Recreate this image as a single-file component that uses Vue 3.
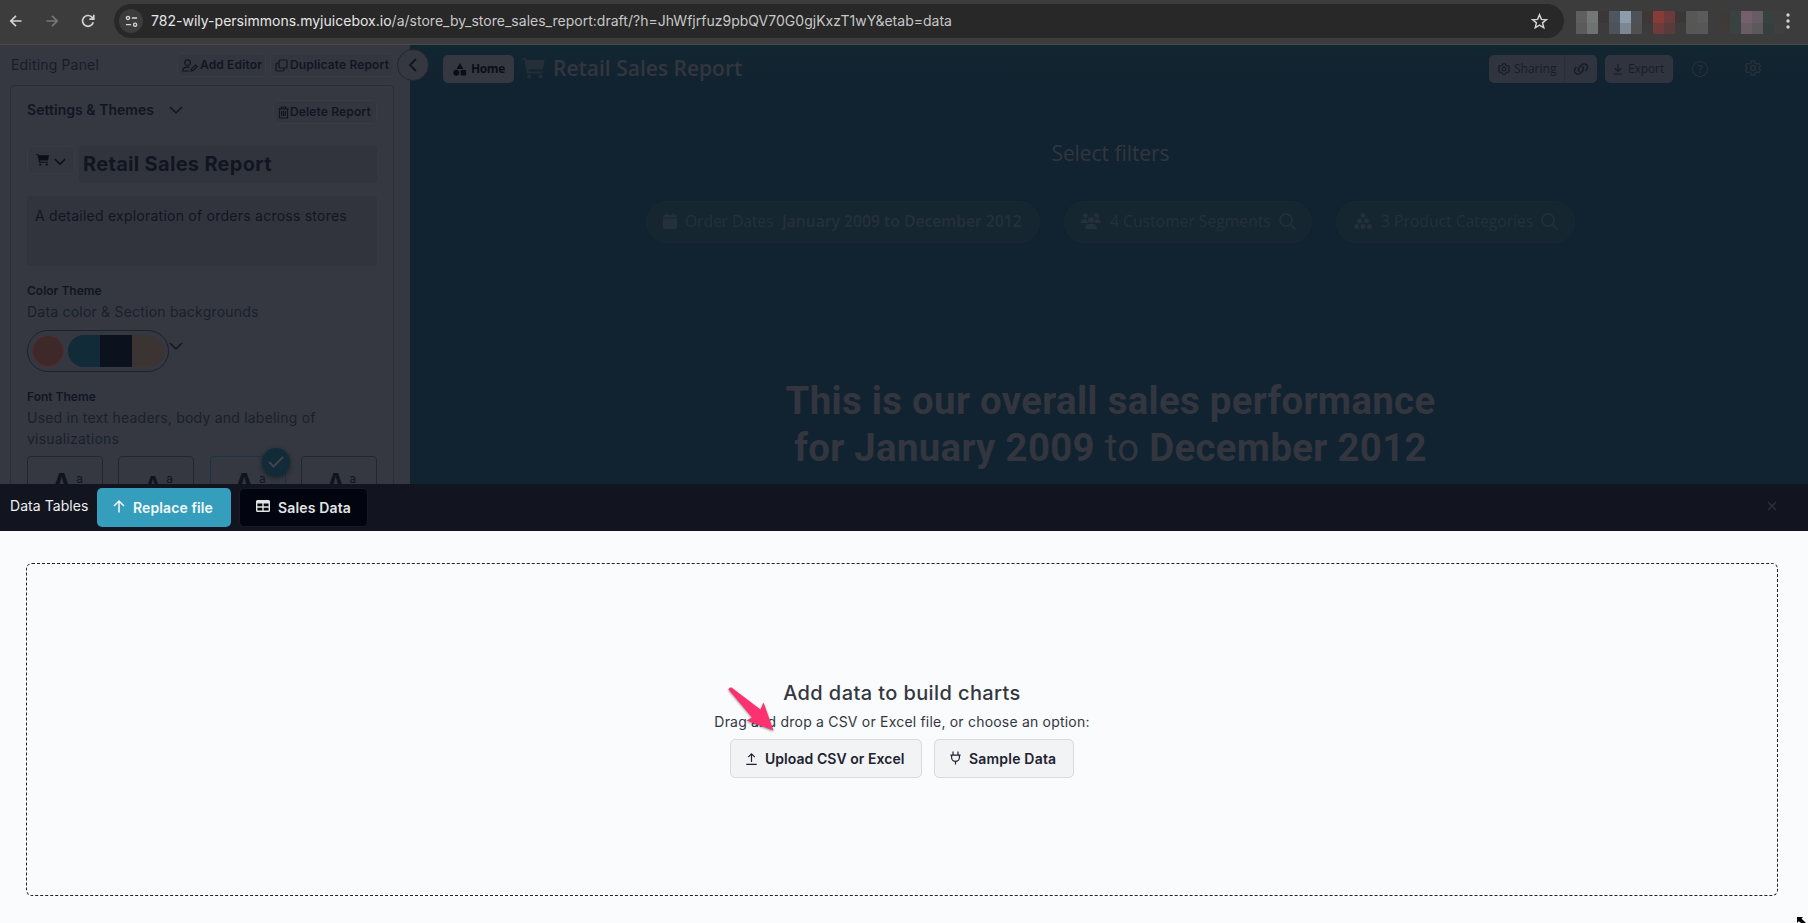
<script setup>
const mosaic = [
  '#5f5f5f', '#757676', '#3b3837', '#50565e', '#8b9dac', '#4c5255', '#3f3736', '#873c3a', '#6a3b3a', '#3a3736', '#575757', '#5b5b5b', '#3c3c3c', '#3e3a3a', '#384341', '#745f6b', '#675b66', '#35423f', '#3e3e3e',
  '#5b5b5b', '#707171', '#3d3c3c', '#4e535b', '#7d8691', '#505050', '#3c3b3b', '#6e3b3b', '#593b3a', '#3c3c3c', '#565656', '#575757', '#3c3c3c', '#403a3a', '#384341', '#6a5c65', '#5d585c', '#363f3d', '#3f3f3f',
]
const fontCards = [
  { id: 'one', selected: false },
  { id: 'two', selected: false },
  { id: 'three', selected: true },
  { id: 'four', selected: false },
]
</script>

<template>
  <div class="page">
    <header class="chrome">
      <svg class="nav back" viewBox="0 0 16 16"><path d="M13.5 8H3M8 2.8 2.8 8 8 13.2" /></svg>
      <svg class="nav forward" viewBox="0 0 16 16"><path d="M2.5 8H13M8 2.8 13.2 8 8 13.2" /></svg>
      <svg class="nav reload" viewBox="0 0 16 16"><path d="M13.2 9.2A5.4 5.4 0 1 1 11.9 4.2L13.6 6M13.8 1.8V6.2H9.4" /></svg>
      <div class="address">
        <span class="site-info">
          <svg viewBox="0 0 14 14"><circle cx="3.2" cy="3.2" r="1.7" /><path d="M7.4 3.2H13M1 10.4H6.6" /><circle cx="10.9" cy="10.4" r="1.7" /></svg>
        </span>
        <span class="url"><b>782-wily-persimmons.myjuicebox.io</b>/a/store_by_store_sales_report:draft/?h=JhWfjrfuz9pbQV70G0gjKxzT1wY&amp;etab=data</span>
        <svg class="star" viewBox="0 0 16 16"><path d="M8 1.6 9.8 6 14.5 6.3 10.9 9.3 12 13.9 8 11.4 4 13.9 5.1 9.3 1.5 6.3 6.2 6Z" /></svg>
      </div>
      <div class="mosaic"><i v-for="(c, i) in mosaic" :key="i" :style="{ background: c }"></i></div>
      <svg class="dots" viewBox="0 0 4 16"><circle cx="2" cy="2" r="1.7" /><circle cx="2" cy="8" r="1.7" /><circle cx="2" cy="14" r="1.7" /></svg>
    </header>

    <div class="workspace">
      <aside class="panel">
        <div class="panel-head">
          <span class="panel-title">Editing Panel</span>
          <button class="tool add">
            <svg class="i-user" viewBox="0 0 16 13"><circle cx="5.6" cy="3.7" r="2.8" /><path d="M7.2 12H.8C.8 9.6 2.6 8.1 5 8.1H7.5M9 12l.6-2.2 4-3.8 1.6 1.6-4 3.8Z" /></svg>
            <span>Add Editor</span>
          </button>
          <button class="tool dup">
            <svg class="i-copy" viewBox="0 0 13 13"><rect x="4" y="1" width="8" height="8" rx="1.3" /><path d="M4 4H2.2Q1 4 1 5.200V10.800Q1 12 2.200 12H7.800Q9 12 9 10.800V9" /></svg>
            <span>Duplicate Report</span>
          </button>
        </div>
        <div class="card">
          <div class="settings-row">
            <span class="settings">Settings &amp; Themes</span>
            <svg class="chev" viewBox="0 0 14 8"><path d="M1 1 7 7 13 1" /></svg>
            <button class="tool del">
              <svg class="i-trash" viewBox="0 0 11 13"><path d="M.3 2.8H10.7M3.3 2.6V1H7.7V2.6M1.5 3V12H9.5V3M3.7 5V10M5.5 5V10M7.3 5V10" /></svg>
              <span>Delete Report</span>
            </button>
          </div>
          <div class="title-row">
            <button class="icon-pick">
              <svg class="i-cart" viewBox="0 0 18 16"><path d="M0 0H2.600L3.100 1.500H17.200L15.700 8.800H4.700L5 10.300H15.400V11.700H3.800L1.800 1.400H0Z" /><circle cx="5.300" cy="14" r="1.500" /><circle cx="14" cy="14" r="1.500" /></svg>
              <svg class="chev small" viewBox="0 0 14 8"><path d="M1 1 7 7 13 1" /></svg>
            </button>
            <div class="title-field">Retail Sales Report</div>
          </div>
          <div class="description">A detailed exploration of orders across stores</div>
          <h4>Color Theme</h4>
          <p>Data color &amp; Section backgrounds</p>
          <div class="palette-row">
            <div class="palette"><i class="accent"></i><div class="bar"><i class="teal"></i><i class="navy"></i><i class="sand"></i></div></div>
            <svg class="chev" viewBox="0 0 14 8"><path d="M1 1 7 7 13 1" /></svg>
          </div>
          <h4>Font Theme</h4>
          <p>Used in text headers, body and labeling of<br>visualizations</p>
          <div class="fonts">
            <div v-for="f in fontCards" :key="f.id" class="font" :class="[f.id, { selected: f.selected }]">
              <b>A</b><small>a</small>
              <span v-if="f.selected" class="check"><svg viewBox="0 0 16 12"><path d="M1 6 5.500 10.500 15 1" /></svg></span>
            </div>
          </div>
        </div>
        <span class="collapse"><svg viewBox="0 0 8 14"><path d="M7 1 1 7 7 13" /></svg></span>
      </aside>

      <main class="report">
        <div class="topbar">
          <button class="home">
            <svg viewBox="0 0 14 13"><path d="M7 0 10.500 6H3.500Z" /><circle cx="3.300" cy="9.700" r="3" /><rect x="7.600" y="7" width="5.500" height="5.500" rx=".5" /></svg>
            <span>Home</span>
          </button>
          <svg class="big-cart" viewBox="0 0 18 16"><path d="M0 0H2.600L3.100 1.500H17.200L15.700 8.800H4.700L5 10.300H15.400V11.700H3.800L1.800 1.400H0Z" /><circle cx="5.300" cy="14" r="1.500" /><circle cx="14" cy="14" r="1.500" /></svg>
          <h1>Retail Sales Report</h1>
          <div class="share">
            <button class="sharing">
              <svg class="gear" viewBox="0 0 16 16"><path d="M6.300 1H9.700L10.200 3 12 4 14 3.400 15.500 6.200 14.100 7.500V8.500L15.500 9.800 14 12.600 12 12 10.200 13 9.700 15H6.300L5.800 13 4 12 2 12.600.5 9.800 1.900 8.500V7.500L.5 6.200 2 3.400 4 4 5.800 3Z" /><circle cx="8" cy="8" r="2.500" /></svg>
              <span>Sharing</span>
            </button>
            <button class="link"><svg viewBox="0 0 16 12"><path d="M6.500 8.800A3.300 3.300 0 0 1 6.300 4.200L8.300 2.200A3.350 3.350 0 0 1 13.700 6.500L12.400 7.900M9.300 3.400A3.300 3.300 0 0 1 9.600 7.900L7.600 9.900A3.350 3.350 0 0 1 2.300 5.500L3.500 4.200" /></svg></button>
          </div>
          <button class="export">
            <svg viewBox="0 0 10 12"><path d="M5 1V8M1.800 5.200 5 8.300 8.200 5.200M.5 11H9.500" /></svg>
            <span>Export</span>
          </button>
          <span class="help">?</span>
          <svg class="gear top" viewBox="0 0 16 16"><path d="M6.300 1H9.700L10.200 3 12 4 14 3.400 15.500 6.200 14.100 7.500V8.500L15.500 9.800 14 12.600 12 12 10.200 13 9.700 15H6.300L5.800 13 4 12 2 12.600.5 9.800 1.900 8.500V7.500L.5 6.200 2 3.400 4 4 5.800 3Z" /><circle cx="8" cy="8" r="2.500" /></svg>
        </div>
        <h2>Select filters</h2>
        <div class="chips">
          <div class="chip dates">
            <svg class="cal" viewBox="0 0 14 16"><path d="M3 0H4.500V2H9.500V0H11V2H12.800Q14 2 14 3.200V4.500H0V3.200Q0 2 1.200 2H3ZM0 5.600H14V14.800Q14 16 12.800 16H1.200Q0 16 0 14.800Z" /></svg>
            <span class="lbl">Order Dates</span>
            <b>January 2009 to December 2012</b>
          </div>
          <div class="chip segments">
            <svg class="people" viewBox="0 0 20 16"><circle cx="4.300" cy="2.600" r="2.500" /><circle cx="15.700" cy="2.600" r="2.500" /><path d="M0 10Q0 6.200 3.500 6.200H6Q5.800 8.500 7.500 10ZM20 10Q20 6.200 16.500 6.200H14Q14.200 8.500 12.500 10ZM4 16Q4 11 8 11H12Q16 11 16 16Z" /><circle cx="10" cy="7" r="3" /></svg>
            <span class="lbl">4 Customer Segments</span>
            <svg class="search" viewBox="0 0 17 17"><circle cx="7" cy="7" r="6" /><path d="M11.400 11.400 16.400 16.400" /></svg>
          </div>
          <div class="chip products">
            <svg class="pyramid" viewBox="0 0 18 16"><circle cx="9" cy="2.500" r="2.500" /><circle cx="5.600" cy="7.800" r="2.500" /><circle cx="12.400" cy="7.800" r="2.500" /><circle cx="2.500" cy="13.400" r="2.500" /><circle cx="9" cy="13.400" r="2.500" /><circle cx="15.500" cy="13.400" r="2.500" /></svg>
            <span class="lbl">3 Product Categories</span>
            <svg class="search" viewBox="0 0 17 17"><circle cx="7" cy="7" r="6" /><path d="M11.400 11.400 16.400 16.400" /></svg>
          </div>
        </div>
        <div class="headline">This is our overall sales performance<br>for January 2009 <em>to</em> December 2012</div>
      </main>
    </div>

    <section class="sheet">
      <div class="sheet-bar">
        <span class="sheet-title">Data Tables</span>
        <button class="replace">
          <svg viewBox="0 0 12 13"><path d="M6 12.500V1M1 6 6 1 11 6" /></svg>
          <span>Replace file</span>
        </button>
        <button class="sales">
          <svg viewBox="0 0 14 12"><path d="M1.500 0H12.500Q14 0 14 1.500V10.500Q14 12 12.500 12H1.500Q0 12 0 10.500V1.500Q0 0 1.500 0ZM1.400 3.400V6.300H6.300V3.400ZM7.700 3.400V6.300H12.600V3.400ZM1.400 7.700V10.600H6.300V7.700ZM7.700 7.700V10.600H12.600V7.700Z" fill-rule="evenodd" /></svg>
          <span>Sales Data</span>
        </button>
        <svg class="close" viewBox="0 0 10 10"><path d="M1 1 9 9M9 1 1 9" /></svg>
      </div>
      <div class="dropzone">
        <h3>Add data to build charts</h3>
        <div class="hint">Drag and drop a CSV or Excel file, or choose an option:</div>
        <div class="actions">
          <button class="upload">
            <svg viewBox="0 0 11 12"><path d="M5.500 9V1M2.200 4.200 5.500 .9 8.800 4.200M.3 11.300H10.700" /></svg>
            <span>Upload CSV or Excel</span>
          </button>
          <button class="sample">
            <svg viewBox="0 0 11 14"><path d="M3 .5V3.500M8 .5V3.500M.4 4.200H10.600M1.600 4.200V6.500A3.900 3.900 0 0 0 9.400 6.500V4.200M5.500 10.500V13.500" /></svg>
            <span>Sample Data</span>
          </button>
          <svg class="pointer" viewBox="0 0 50 50"><path d="M1.500 4.500Q2 2 4.500 2.500L33.500 24.500 36.500 17.500 46.500 45.500 19.500 35.500 25 32.500Z" /></svg>
        </div>
      </div>
      <svg class="cursor" viewBox="0 0 9 6"><path d="M0 0H6L4.500 1.500 9 6H4L1.700 4.300 0 6Z" /></svg>
    </section>
  </div>
</template>

<style>
body { margin: 0; overflow: hidden; }
</style>

<style scoped>
* { box-sizing: border-box; }
.page { position: relative; width: 1808px; height: 923px; display: flex; flex-direction: column; overflow: hidden; font-family: Inter, "Liberation Sans", sans-serif; font-size: 14px; background: #fafbfd; }
svg { display: block; flex: none; fill: none; stroke: currentColor; stroke-width: 1.2; overflow: visible; }
button { font: inherit; color: inherit; border: 0; margin: 0; padding: 0; display: flex; align-items: center; flex: none; background: none; white-space: nowrap; }
button span { margin-bottom: 1px; }
span, b { white-space: nowrap; }
h1, h2, h3, h4, p { margin: 0; }

.chrome { height: 45px; flex: none; background: #3c3c3c; border-bottom: 1px solid #494a4a; display: flex; align-items: flex-start; color: #d2d3d3; }
.nav { width: 16px; height: 16px; margin-top: 13px; stroke-width: 1.7; }
.back { margin-left: 8px; }
.forward { margin-left: 20px; color: #777; }
.reload { margin-left: 20px; }
.address { width: 1450px; height: 34px; margin: 4px 0 0 18px; border-radius: 17px; background: #282828; display: flex; align-items: center; }
.site-info { width: 24px; height: 24px; margin-left: 5px; border-radius: 50%; background: #3c3c3c; display: flex; align-items: center; justify-content: center; }
.site-info svg { width: 13px; height: 13px; stroke-width: 1.5; }
.url { margin: 0 0 1px 8px; letter-spacing: .015px; color: #c7c7c7; }
.url b { font-weight: 400; color: #e6e6e6; }
.star { width: 17px; height: 17px; margin-left: auto; margin-right: 16px; stroke-width: 1.4; }
.mosaic { display: grid; grid-template-columns: repeat(19, 11px); grid-auto-rows: 11.5px; margin: 11px 0 0 12px; }
.dots { width: 4px; height: 16px; margin: 13px 0 0 1px; fill: currentColor; stroke: none; }

.workspace { height: 439px; flex: none; display: flex; overflow: hidden; }
.panel { position: relative; z-index: 1; width: 410px; flex: none; background: #353841; color: #111522; }
.panel-head { height: 40px; padding-left: 11px; display: flex; align-items: center; }
.panel-title { color: #171c29; width: 166px; margin-bottom: 1px; letter-spacing: .17px; }
.tool { height: 24px; border: 1px solid #3a3c45; border-radius: 5px; background: #34363f; font-size: 12px; font-weight: 600; letter-spacing: .14px; }
.add { width: 89px; padding-left: 4px; gap: 2px; }
.dup { width: 124px; margin-left: 4px; padding-left: 4px; gap: 2px; }
.i-user { width: 16px; height: 13px; }
.i-copy { width: 13px; height: 13px; }
.card { width: 384px; height: 420px; margin-left: 10px; border: 1px solid #292d36; border-radius: 4px; padding: 14px 16px 0; }
.settings-row { display: flex; height: 24px; }
.settings { width: 142px; line-height: 20px; font-weight: 600; letter-spacing: .03px; }
.chev { width: 14px; height: 8px; margin-top: 6px; stroke-width: 1.5; }
.del { width: 104px; margin-left: auto; padding-left: 4px; gap: 1px; }
.i-trash { width: 11px; height: 13px; }
.title-row { display: flex; gap: 4px; margin-top: 22px; }
.icon-pick { width: 48px; height: 28px; border: 1px solid #3a3c45; border-radius: 5px; background: #34363f; padding-left: 8px; gap: 4px; color: #0c0f19; }
.i-cart { width: 14px; height: 12px; fill: currentColor; stroke: none; }
.small { width: 12px; height: 7px; margin-top: 2px; stroke-width: 1.8; }
.title-field { width: 298px; height: 37px; border-radius: 4px; background: #31343d; padding-left: 4px; font-size: 20px; font-weight: 700; line-height: 36px; letter-spacing: .31px; }
.description { height: 70px; margin-top: 13px; border-radius: 4px; background: #31343d; padding: 10px 8px; line-height: 20px; letter-spacing: .24px; }
h4 { margin-top: 15px; font-size: 12px; line-height: 20px; font-weight: 600; }
p { line-height: 21px; color: #191f2b; letter-spacing: .21px; }
.palette-row { display: flex; margin-top: 8px; }
.palette { width: 142px; height: 42px; border: 1px solid #1b222d; border-radius: 21px; padding: 4px; display: flex; gap: 4px; }
.palette i { display: block; width: 32px; height: 32px; }
.palette .accent { border-radius: 50%; background: #3f2829; border: 1px solid #4d2e2f; }
.bar { display: flex; border-radius: 16px; overflow: hidden; }
.teal { background: #112b38; }
.navy { background: #0b111d; }
.sand { background: #3b3433; }
.palette-row .chev { margin: 12px 0 0; }
.fonts { display: flex; justify-content: space-between; margin-top: 7px; }
.font { position: relative; width: 76px; height: 60px; border: 1px solid #22272f; border-radius: 4px; display: flex; justify-content: center; gap: 5px; padding-left: 5px; color: #10141f; }
.font b { font-size: 26px; line-height: 26px; padding-top: 13px; }
.font small { font-size: 12px; line-height: 14px; padding-top: 15px; }
.font.two b { font-size: 22px; padding-top: 14px; }
.font.four b { font-size: 24px; }
.font.selected { border-color: #143645; }
.check { position: absolute; left: 51px; top: -9px; width: 28px; height: 28px; border-radius: 50%; background: #112b39; color: #41444d; display: flex; align-items: center; justify-content: center; box-shadow: 0 2px 5px #1b202a; }
.check svg { width: 16px; height: 12px; stroke-width: 2; }
.collapse { position: absolute; left: 397px; top: 4px; width: 32px; height: 32px; border: 1px solid #23262e; border-radius: 50%; background: #353841; display: flex; align-items: center; justify-content: center; color: #12151d; }
.collapse svg { width: 8px; height: 14px; stroke-width: 1.8; }

.report { flex: 1; min-width: 0; padding-left: 3px; background: linear-gradient(#122630, #112330 35px); color: #33363f; font-family: "Open Sans", "Noto Sans", sans-serif; }
.topbar { height: 48px; display: flex; align-items: center; padding-left: 30px; }
.home { width: 71px; height: 28px; border-radius: 5px; background: #353841; color: #0b0e18; padding-left: 10px; gap: 4px; font-size: 12px; font-weight: 700; letter-spacing: -.4px; }
.home svg { width: 14px; height: 13px; fill: currentColor; stroke: none; }
.big-cart { width: 24px; height: 21px; margin: 0 0 2px 8px; color: #252f39; fill: currentColor; stroke: none; }
h1 { margin: 0 0 2px 7px; font-size: 21px; font-weight: 600; line-height: 28px; width: 936px; }
.share { display: flex; height: 28px; border-radius: 5px; background: #30343e; color: #171d28; }
.sharing { width: 76px; padding-left: 9px; gap: 4px; border-right: 1px solid #282d37; font-size: 12px; }
.gear { width: 12px; height: 12px; stroke-width: 1.5; }
.link { width: 32px; justify-content: center; }
.link svg { width: 16px; height: 12px; stroke-width: 1.5; }
.export { width: 68px; height: 28px; margin-left: 8px; border-radius: 5px; background: #30343e; color: #171d28; padding-left: 8px; gap: 5px; font-size: 12px; letter-spacing: -.1px; }
.export svg { width: 10px; height: 12px; }
.help { width: 16px; height: 16px; margin-left: 19px; border: 1.5px solid; border-radius: 50%; font-size: 11px; line-height: 13px; font-weight: 600; text-align: center; color: #28323c; }
.gear.top { width: 16px; height: 16px; margin: 0 0 2px 37px; color: #28323c; stroke-width: 1.3; }
h2 { margin-top: 44px; text-align: center; font-size: 21px; font-weight: 400; line-height: 32px; letter-spacing: -.06px; }
.chips { display: flex; justify-content: center; gap: 24px; margin-top: 32px; }
.chip { height: 42px; border-radius: 21px; background: #152631; border: 1px solid #182933; display: flex; align-items: center; color: #25303a; font-size: 15.7px; }
.chip span, .chip b { margin-bottom: 2px; }
.chip svg { stroke: none; fill: currentColor; margin-top: -2px; }
.chip svg.search { width: 17px; height: 17px; fill: none; stroke: currentColor; stroke-width: 1.6; }
.cal { width: 14px; height: 16px; }
.people { width: 20px; height: 16px; }
.pyramid { width: 18px; height: 16px; }
.dates { width: 394px; padding-left: 16px; }
.dates .lbl { margin-left: 8px; width: 97px; letter-spacing: -.1px; }
.dates b { font-weight: 600; }
.segments { width: 248px; padding-left: 16px; }
.segments .lbl { margin-left: 9px; width: 169px; }
.products { width: 239px; padding-left: 17px; }
.products .lbl { margin-left: 9px; width: 160px; }
.headline { margin-top: 134px; text-align: center; font-family: Roboto, sans-serif; font-size: 38.4px; line-height: 47px; font-weight: 700; letter-spacing: .3px; }
.headline em { font-style: normal; font-weight: 400; }

.sheet { position: relative; height: 439px; flex: none; background: #fafbfd; }
.sheet-bar { height: 47px; background: #12151f; color: #eceef0; display: flex; align-items: flex-start; padding: 4px 0 0 10px; }
.sheet-title { width: 87px; line-height: 36px; letter-spacing: .06px; }
.replace { width: 134px; height: 39px; border-radius: 5px; background: #359ebc; color: #f3f7f8; padding-left: 16px; gap: 8px; font-weight: 600; letter-spacing: .1px; }
.replace svg { width: 12px; height: 13px; margin-top: -3px; stroke-width: 1.5; }
.sales { width: 129px; height: 39px; margin-left: 8px; border: 1px solid #171a24; border-radius: 5px; background: #02050f; color: #e3e4e6; padding-left: 16px; gap: 8px; font-weight: 600; letter-spacing: .15px; }
.sales svg { width: 14px; height: 12px; margin-top: -3px; fill: currentColor; stroke: none; }
.close { width: 10px; height: 10px; margin: 13px 31px 0 auto; color: #2c2f38; stroke-width: 1.5; }
.dropzone { width: 1752px; height: 333px; margin: 32px 0 0 26px; border: 1px dashed #222; border-radius: 6px; color: #34373f; text-align: center; }
h3 { margin-top: 114px; font-size: 20px; font-weight: 500; line-height: 30px; letter-spacing: .4px; }
.hint { margin-top: 4px; line-height: 20px; letter-spacing: .2px; }
.actions { position: relative; display: flex; justify-content: center; gap: 12px; margin-top: 7px; }
.actions button { height: 39px; border: 1px solid #d9dbde; border-radius: 5px; background: #f2f3f5; color: #20222e; font-weight: 600; padding-left: 15px; gap: 8px; }
.upload { width: 192px; letter-spacing: .04px; }
.upload svg { width: 11px; height: 12px; }
.sample { width: 140px; letter-spacing: .2px; }
.sample svg { width: 11px; height: 14px; margin-top: -2px; }
.pointer { position: absolute; left: 700px; top: -54px; width: 50px; height: 50px; fill: #fd3070; stroke: none; filter: drop-shadow(0 1px 1px rgb(0 0 0 / 45%)); }
.cursor { position: absolute; right: 2px; bottom: 0; width: 9px; height: 6px; fill: #000; stroke: none; }
</style>
